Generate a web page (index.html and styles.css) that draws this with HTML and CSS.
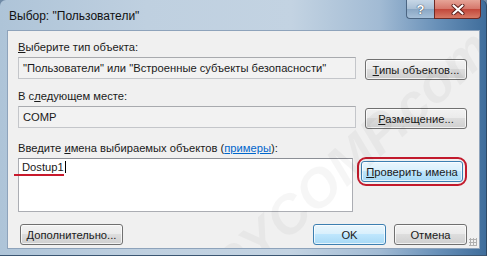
FILE: index.html
```html
<!DOCTYPE html>
<html lang="ru">
<head>
  <meta charset="UTF-8">
  <title>Выбор: "Пользователи"</title>
  <link rel="stylesheet" href="styles.css">
</head>
<body>

  <div class="window">
    <!-- title bar -->
    <div class="titlebar">
      <span class="title">Выбор: "Пользователи"</span>
      <div class="caption-btns">
        <div class="cap-btn help">?</div>
        <div class="cap-btn close">
          <svg width="14" height="11" viewBox="0 0 14 11">
            <path d="M2.5 1.5 L11.5 9.5 M11.5 1.5 L2.5 9.5" stroke="#5a1d18" stroke-width="4" stroke-linecap="round"/>
            <path d="M2.5 1.5 L11.5 9.5 M11.5 1.5 L2.5 9.5" stroke="#fff" stroke-width="2.2" stroke-linecap="round"/>
          </svg>
        </div>
      </div>
    </div>

    <div class="content">
      <div class="label"><u>В</u>ыберите тип объекта:</div>
      <div class="row">
        <div class="field">"Пользователи" или "Встроенные субъекты безопасности"</div>
        <button class="btn side-btn"><u>Т</u>ипы объектов...</button>
      </div>

      <div class="label label-2">В с<u>л</u>едующем месте:</div>
      <div class="row">
        <div class="field">COMP</div>
        <button class="btn side-btn"><u>Р</u>азмещение...</button>
      </div>

      <div class="label label-3">Введите <u>и</u>мена выбираемых объектов (<a href="#" class="link">примеры</a>):</div>
      <div class="row names-row">
        <div class="names-box">
          <span class="typed">Dostup1</span>
          <span class="red-line"></span>
        </div>
        <div class="highlight">
          <button class="btn btn-default check-btn"><u>П</u>роверить имена</button>
        </div>
      </div>

      <div class="footer">
        <button class="btn more-btn"><u>Д</u>ополнительно...</button>
        <span class="spacer"></span>
        <button class="btn btn-default ok-btn">OK</button>
        <button class="btn cancel-btn">Отмена</button>
      </div>

      <div class="grip"></div>
      <div class="watermark">SPYCOMP.com</div>
    </div>
  </div>

</body>
</html>
```

FILE: styles.css
```css
body {
  margin: 0;
  width: 487px;
  height: 256px;
  overflow: hidden;
  background-color: #6f8aa6;
  font-family: "Liberation Sans", Arial, sans-serif;
  font-size: 11.2px;
  color: #1a1a1a;
}
.window {
  width: 487px;
  height: 256px;
  box-sizing: border-box;
  display: flex;
  flex-direction: column;
  padding: 0 6px 6px 7px;
  border-radius: 6px 6px 0 0;
  border-right: 1px solid #2e4a66;
  border-bottom: 1px solid #3b5672;
  background: linear-gradient(to right, #aec4d8 0%, #bfd0e0 30%, #c3d3e2 60%, #a2bbd4 78%, #6890b8 90%, #3f6d9b 100%);
}
.titlebar {
  height: 30px;
  display: flex;
  align-items: flex-start;
}
.title {
  margin-top: 9px;
  margin-left: 2px;
  font-size: 12px;
  color: #111;
}
.caption-btns {
  margin-left: auto;
  display: flex;
  margin-right: -1px;
}
.cap-btn {
  height: 19px;
  box-sizing: border-box;
  border: 1px solid #4b6582;
  border-top: none;
  display: flex;
  align-items: center;
  justify-content: center;
}
.help {
  width: 28px;
  border-radius: 0 0 0 4px;
  border-right: none;
  background: linear-gradient(#c7d7e7 0%, #a9bfd5 50%, #8aa7c4 51%, #a6c0d9 100%);
  color: #fff;
  font-weight: bold;
  font-size: 13px;
  text-shadow: 0 0 1px #2a3d52, 0 0 1px #2a3d52;
}
.close {
  width: 47px;
  border-radius: 0 0 4px 0;
  border-color: #6e2a24;
  background: linear-gradient(#e6a497 0%, #d5766a 50%, #c2473a 51%, #d77a66 100%);
}
.content {
  flex: 1;
  position: relative;
  overflow: hidden;
  display: flex;
  flex-direction: column;
  padding: 9px 12px 0 10px;
  background-color: #f0f0f0;
  border: 1px solid #8ea3bb;
}
.label {
  height: 14px;
  line-height: 14px;
}
.label-2 {
  margin-top: 9px;
}
.label-3 {
  margin-top: 12px;
}
.link {
  color: #0066cc;
}
.row {
  display: flex;
  margin-top: 3px;
}
.field {
  width: 338px;
  height: 22px;
  box-sizing: border-box;
  padding: 0 4px;
  line-height: 20px;
  background-color: #f2f2f2;
  border: 1px solid #c4c6ca;
  border-top-color: #a8aaae;
}
.btn {
  font-family: inherit;
  font-size: 11.2px;
  color: #1a1a1a;
  height: 21px;
  padding: 0;
  white-space: nowrap;
  box-sizing: border-box;
  border: 1px solid #707070;
  border-radius: 3px;
  background: linear-gradient(#f2f2f2 0%, #ebebeb 45%, #dddddd 50%, #cfcfcf 100%);
  box-shadow: inset 0 0 0 1px rgba(255, 255, 255, 0.7);
}
.btn-default {
  border-color: #3c7fb1;
  background: linear-gradient(#eaf6fd 0%, #d9f0fc 45%, #bee6fd 50%, #a7d9f5 100%);
}
.side-btn {
  width: 102px;
  margin-left: 9px;
  margin-top: 2px;
}
.names-row {
  align-items: flex-start;
}
.names-box {
  position: relative;
  width: 338px;
  height: 54px;
  box-sizing: border-box;
  padding: 2px 3px;
  background-color: #fff;
  border: 1px solid #abadb3;
  border-top-color: #8c8f96;
}
.typed {
  border-right: 1px solid #000;
  padding-right: 1px;
}
.red-line {
  position: absolute;
  left: -5px;
  top: 15px;
  width: 50px;
  height: 2px;
  background-color: #c8192c;
}
.highlight {
  margin-left: 4px;
  margin-top: -1px;
  padding: 2px 2px;
  border: 2px solid #c21a2c;
  border-radius: 9px;
}
.check-btn {
  width: 102px;
}
.footer {
  display: flex;
  margin-top: 12px;
  gap: 8px;
}
.spacer {
  flex: 1;
}
.more-btn {
  width: 103px;
  margin-left: 2px;
}
.ok-btn, .cancel-btn {
  width: 73px;
}
.grip {
  position: absolute;
  right: 2px;
  bottom: 2px;
  width: 8px;
  height: 8px;
  background-image: radial-gradient(circle, #b0b0b0 1px, transparent 1.2px);
  background-size: 3px 3px;
}
.watermark {
  position: absolute;
  left: 135px;
  top: 108px;
  font-size: 54px;
  font-weight: bold;
  font-style: italic;
  color: rgba(0, 0, 0, 0.035);
  transform: rotate(-42deg);
  pointer-events: none;
  white-space: nowrap;
}
```
